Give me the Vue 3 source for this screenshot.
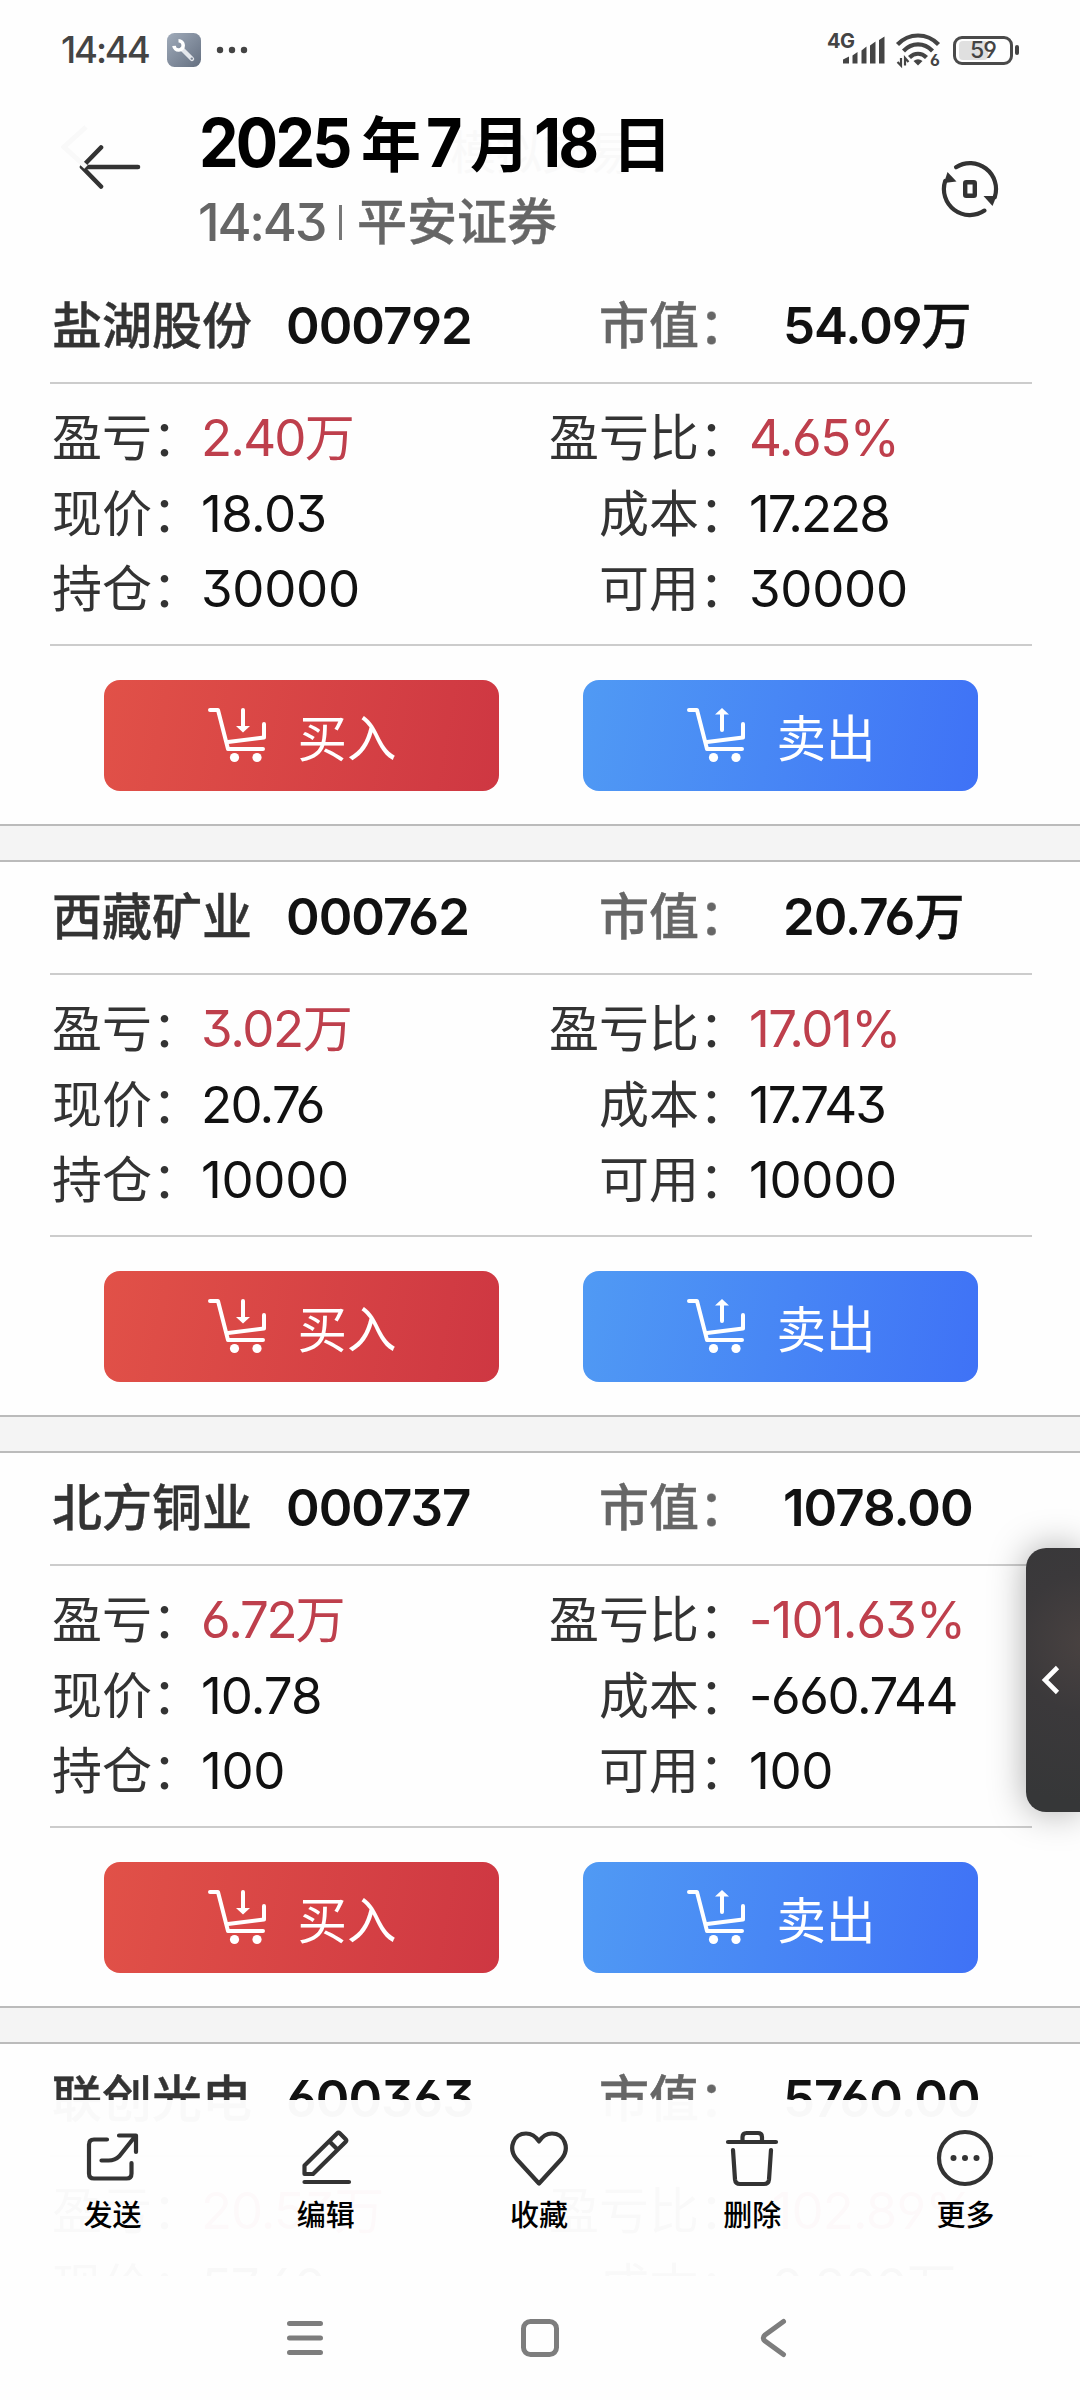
<script setup>
const holdings = [
  { name: '盐湖股份', code: '000792', value: '54.09万', profit: '2.40万', ratio: '4.65%', price: '18.03', cost: '17.228', held: '30000', usable: '30000' },
  { name: '西藏矿业', code: '000762', value: '20.76万', profit: '3.02万', ratio: '17.01%', price: '20.76', cost: '17.743', held: '10000', usable: '10000' },
  { name: '北方铜业', code: '000737', value: '1078.00', profit: '6.72万', ratio: '-101.63%', price: '10.78', cost: '-660.744', held: '100', usable: '100' },
  { name: '联创光电', code: '600363', value: '5760.00', profit: '20.53万', ratio: '-102.89%', price: '57.60', cost: '-0.200万', held: '100', usable: '100' },
]

const rowsOf = (h) => [
  { left: '盈亏', leftValue: h.profit, right: '盈亏比', rightValue: h.ratio, red: true },
  { left: '现价', leftValue: h.price, right: '成本', rightValue: h.cost },
  { left: '持仓', leftValue: h.held, right: '可用', rightValue: h.usable },
]

// Splits a value into its number and its trailing unit
const num = (v) => v.replace('万', '')
const unit = (v) => (v.endsWith('万') ? '万' : '')

// Decimals are set tighter than whole numbers; wide digits tighten further
function tracking(v) {
  if (!v.includes('.')) return { letterSpacing: '-0.3px' }
  const wide = (v.match(/[2467]/g) || []).length
  const plain = !unit(v) && !v.includes('%') && !v.startsWith('-')
  const total =
    0.5 + wide * 1.9 + (v.includes('%') ? 3 : 0) + (unit(v) ? 3 : 0) + (v.startsWith('-') ? 1.5 : 0) +
    (plain ? 2.2 : 0) + (v.includes('17') ? 3.5 : 0)
  return { letterSpacing: `${-(total / num(v).length).toFixed(2)}px` }
}
</script>

<template>
  <div class="screen">
    <div class="status">
      <span class="clock">14:44</span>
      <svg class="wrench" width="34" height="34" viewBox="0 0 34 34">
        <defs>
          <linearGradient id="tool" x1="0" y1="0" x2="1" y2="1">
            <stop offset="0" stop-color="#a0abba" />
            <stop offset="1" stop-color="#646f80" />
          </linearGradient>
        </defs>
        <rect width="34" height="34" rx="7.5" fill="url(#tool)" />
        <path d="M15 16L25 26" stroke="#e4e7ec" stroke-width="4.400" stroke-linecap="round" />
        <path d="M11.500 7.800A4.600 4.600 0 1 1 7 12.800" fill="none" stroke="#fff" stroke-width="3.600" />
        <circle cx="24.800" cy="25.600" r="1.200" fill="#7b8696" />
      </svg>
      <svg class="dots" width="32" height="8" viewBox="0 0 32 8">
        <g fill="#444"><circle cx="4" cy="4" r="3.200" /><circle cx="16" cy="4" r="3.200" /><circle cx="28" cy="4" r="3.200" /></g>
      </svg>
      <div class="indicators">
        <div class="cell">
          <span class="net">4G</span>
          <svg width="42" height="28" viewBox="0 0 42 28" fill="#444">
            <path d="M0 27.5V23.5L6 20.5V27.5ZM9.5 27.5V19.5L14.5 16V27.5ZM18.5 27.5V14.5L23.5 10.5V27.5ZM27 27.5V9.5L32.500 5.500V27.500ZM36 27.500V4L41.500 .5V27.500Z" />
          </svg>
        </div>
        <svg class="wifi" width="44" height="34" viewBox="0 0 44 34">
          <g fill="none" stroke="#444" stroke-width="4.200">
            <path d="M1.500 11.500C13 -.5 31 -.5 42.500 11.500" />
            <path d="M7.500 18C16 9.200 28 9.200 36.500 18" />
            <path d="M13.500 24.500C18.500 19.500 25.500 19.500 30.500 24.500" />
          </g>
          <path d="M17.500 28Q22 24.500 26.500 28L22 32.500Z" fill="#444" />
          <path d="M5 25V32.500L1.500 29M9 32.500V25L12.500 29" fill="none" stroke="#444" stroke-width="2.200" />
          <text x="34" y="32.500" font-size="16" font-weight="700" fill="#444">6</text>
        </svg>
        <div class="battery"><span class="level"></span><b>59</b></div>
        <i class="nub"></i>
      </div>
    </div>

    <header class="head">
      <svg class="ghost-back" width="28" height="46" viewBox="0 0 28 46"><path d="M25 3L3 23L25 43" fill="none" stroke="#f9f9f9" stroke-width="5" /></svg>
      <span class="ghost-title">模拟交易</span>
      <svg class="back" width="62" height="46" viewBox="0 0 62 46">
        <path d="M22 3.500L3 23L22 42.500M3 23H59" fill="none" stroke="#333" stroke-width="4.600" stroke-linecap="round" stroke-linejoin="round" />
      </svg>
      <div class="titles">
        <h1><span class="year"><b>2025</b></span><em>年</em><span class="month"><b>7</b></span><em>月</em><span class="day"><b>18</b></span><em>日</em></h1>
        <p><span>14:43</span><i></i><em>平安证券</em></p>
      </div>
      <svg class="refresh" width="60" height="60" viewBox="0 0 60 60">
        <g fill="none" stroke="#333" stroke-width="4.200" stroke-linecap="round">
          <path d="M16 8.200A26 26 0 0 1 54.800 38" />
          <path d="M44.500 51.600A26 26 0 0 1 5.200 22" />
        </g>
        <path d="M7.500 13L16.500 22.500L4 24Z" fill="#333" />
        <path d="M52.500 47L43.500 37L56.500 37Z" fill="#333" />
        <rect x="25.200" y="23.200" width="9.600" height="13.600" rx="1" fill="none" stroke="#333" stroke-width="4.400" />
      </svg>
    </header>

    <main>
      <section v-for="h in holdings" :key="h.code" class="card">
        <div class="top">
          <span class="name">{{ h.name }}</span>
          <span class="code">{{ h.code }}</span>
          <span class="cap">市值：</span>
          <span class="total">{{ num(h.value) }}<em>{{ unit(h.value) }}</em></span>
        </div>
        <div class="grid">
          <div v-for="r in rowsOf(h)" :key="r.left" class="row" :class="{ red: r.red }">
            <span class="label left">{{ r.left }}：</span>
            <span class="val" :style="tracking(r.leftValue)">{{ num(r.leftValue) }}<em>{{ unit(r.leftValue) }}</em></span>
            <span class="label right">{{ r.right }}：</span>
            <span class="val" :style="tracking(r.rightValue)">{{ num(r.rightValue) }}<em>{{ unit(r.rightValue) }}</em></span>
          </div>
        </div>
        <div class="actions">
          <button v-for="side in ['buy', 'sell']" :key="side" :class="side">
            <svg width="60" height="58" viewBox="0 0 60 58">
              <path d="M4 4H12L22 43H57M22 36L58 31.500V18" fill="none" stroke="#fff" stroke-width="4" stroke-linecap="round" stroke-linejoin="round" />
              <circle cx="28.500" cy="51.500" r="4.600" fill="#fff" /><circle cx="51" cy="51.500" r="4.600" fill="#fff" />
              <g v-if="side === 'buy'"><path d="M37 4V22" stroke="#fff" stroke-width="4" stroke-linecap="round" /><path d="M30 20H44L37 26.500Z" fill="#fff" /></g>
              <g v-else><path d="M37 8V24" stroke="#fff" stroke-width="4" stroke-linecap="round" /><path d="M30 8.500H44L37 2Z" fill="#fff" /></g>
            </svg>
            <span>{{ side === 'buy' ? '买入' : '卖出' }}</span>
          </button>
        </div>
      </section>
    </main>

    <div class="side-tab">
      <svg width="20" height="32" viewBox="0 0 20 32"><path d="M16.500 3.500L4 16L16.500 28.500" fill="none" stroke="#fff" stroke-width="4.600" /></svg>
    </div>

    <footer>
      <div class="tools">
        <div class="tool">
          <svg width="60" height="60" viewBox="0 0 60 60"><path d="M24 11.500H11Q6 11.500 6 16.500V45.500Q6 50.500 11 50.500H43.500Q48.500 50.500 48.500 45.500V35M36 7.500H53V24M52 8.500L36.500 28Q32 32.500 25.500 32.500H18.500" /></svg>
          <span>发送</span>
        </div>
        <div class="tool">
          <svg width="60" height="60" viewBox="0 0 60 60"><path d="M8.500 54H53M8.500 46V37.500L41 5.500Q42.500 4 44 5.500L49.500 11Q51 12.500 49.500 14L17 46ZM33.500 13.500L41.500 21.500" /></svg>
          <span>编辑</span>
        </div>
        <div class="tool">
          <svg width="60" height="60" viewBox="0 0 60 60"><path d="M30 55.500L7.500 31C-1.500 20 5 5.500 17 5.500Q25 5.500 30 13.500Q35 5.500 43 5.500C55 5.500 61.500 20 52.500 31Z" /></svg>
          <span>收藏</span>
        </div>
        <div class="tool">
          <svg width="60" height="60" viewBox="0 0 60 60"><path d="M6 14H54M20.500 14V9Q20.500 5 24.500 5H36Q40 5 40 9V14M11 22L13 51.500Q13.500 56 18 56H42Q46.500 56 47 51.500L49 22" /></svg>
          <span>删除</span>
        </div>
        <div class="tool">
          <svg width="60" height="60" viewBox="0 0 60 60"><circle cx="30" cy="30" r="26" /><g class="solid"><circle cx="18.500" cy="30" r="3" /><circle cx="30" cy="30" r="3" /><circle cx="41.500" cy="30" r="3" /></g></svg>
          <span>更多</span>
        </div>
      </div>
      <nav>
        <svg width="40" height="40" viewBox="0 0 40 40"><path d="M4.500 5.500H35.500M4.500 20H35.500M4.500 34.500H35.500" /></svg>
        <svg width="40" height="40" viewBox="0 0 40 40"><rect x="3.500" y="3.500" width="33" height="33" rx="7" /></svg>
        <svg width="40" height="40" viewBox="0 0 40 40"><path d="M28.500 3.500L10 17Q6.500 20 10 23L28.500 36.500" /></svg>
      </nav>
    </footer>
  </div>
</template>

<style>
body {
  background: #fefefe;
}
</style>

<style scoped>
.screen {
  position: relative;
  width: 1080px;
  height: 2400px;
  overflow: hidden;
  background: #fefefe;
  color: #111;
  font-family: Inter, "Noto Sans CJK SC", sans-serif;
  font-feature-settings: "cv03", "cv04", "cv09";
}

svg {
  display: block;
  flex: none;
}

em {
  font-family: "Noto Sans CJK SC", sans-serif;
  font-style: normal;
  line-height: 0;
}

main {
  height: 2005px;
  overflow: hidden;
}

.status {
  display: flex;
  align-items: center;
  box-sizing: border-box;
  height: 100px;
  padding-left: 61px;
  color: #444;
}

.clock {
  width: 106px;
  font-size: 36.5px;
  font-weight: 500;
  letter-spacing: -2.1px;
}

.dots {
  margin-left: 15px;
}

.indicators {
  display: flex;
  align-items: center;
  margin-left: auto;
  padding-right: 61px;
}

.cell {
  position: relative;
  width: 42px;
  margin-right: 11px;
}

.net {
  position: absolute;
  left: -16px;
  top: -5px;
  font-size: 20px;
  font-weight: 700;
  line-height: 20px;
  letter-spacing: -0.5px;
}

.wifi {
  margin-right: 13px;
  overflow: visible;
}

.battery {
  position: relative;
  box-sizing: border-box;
  width: 60px;
  height: 29px;
  border: 3px solid #4a4a4a;
  border-radius: 9px;
  text-align: center;
}

.battery b {
  position: relative;
  display: block;
  font-size: 23px;
  font-weight: 500;
  line-height: 23px;
  letter-spacing: -1px;
}

.level {
  position: absolute;
  left: 3px;
  top: 2px;
  width: 29px;
  height: 19px;
  border-radius: 4px;
  background: #e0e0e0;
}

.nub {
  width: 4px;
  height: 10px;
  margin-left: 2px;
  border-radius: 2px;
  background: #444;
}

.head {
  position: relative;
  display: flex;
  height: 171px;
  padding-left: 79px;
}

.back {
  margin-top: 44px;
}

.ghost-back {
  position: absolute;
  left: 61px;
  top: 24px;
}

.ghost-title {
  position: absolute;
  left: 450px;
  top: 22px;
  color: #f9f9f9;
  font-size: 46px;
  line-height: 60px;
}

.titles {
  position: relative;
  margin-left: 58px;
}

h1 {
  display: flex;
  align-items: baseline;
  height: 90px;
  margin: 0;
  color: #000;
  font-size: 68px;
  font-weight: 700;
  line-height: 85px;
  white-space: nowrap;
}

h1 em {
  width: 60px;
  font-size: 60px;
}

h1 span {
  box-sizing: border-box;
  letter-spacing: -3px;
}

h1 b {
  display: inline-block;
  font-weight: 650;
  transform: scaleX(0.925);
  transform-origin: 0 50%;
}

.year {
  width: 162px;
}

.month {
  width: 49px;
  padding-left: 5px;
}

.day {
  width: 82px;
  padding-left: 4px;
}

p {
  display: flex;
  align-items: center;
  height: 64px;
  margin: 0;
  color: #666;
  font-size: 52px;
  font-weight: 500;
}

p span {
  width: 141px;
  margin-left: -1px;
  letter-spacing: -2.2px;
}

p i {
  width: 3px;
  height: 35px;
  margin-right: 15px;
  background: #777;
}

p em {
  padding-bottom: 8px;
  font-size: 50px;
  -webkit-text-stroke: 0.4px;
}

.refresh {
  position: absolute;
  left: 940px;
  top: 59px;
}

.card {
  border-bottom: 2px solid #bbb;
}

.card::after {
  content: "";
  display: block;
  height: 34px;
  border-top: 2px solid #bbb;
  background: #f4f4f4;
}

.top {
  display: flex;
  align-items: baseline;
  height: 111px;
  margin: 0 48px 0 50px;
  border-bottom: 2px solid #ccc;
  font-size: 51px;
  font-weight: 600;
  line-height: 109px;
  letter-spacing: -1px;
}

.top em {
  font-size: 50px;
  font-weight: 500;
  -webkit-text-stroke: 0.5px;
}

.name,
.cap {
  font-size: 50px;
  font-weight: 500;
  letter-spacing: 0;
  white-space: nowrap;
  -webkit-text-stroke: 0.4px;
}

.name {
  width: 234px;
  padding-left: 2px;
  color: #333;
}

.code {
  width: 313px;
}

.cap {
  width: 184px;
  color: #666;
}

.grid {
  box-sizing: border-box;
  height: 262px;
  margin: 0 48px 0 50px;
  padding-top: 16px;
  border-bottom: 2px solid #ccc;
}

.row {
  display: flex;
  align-items: baseline;
  height: 75.67px;
  font-size: 51px;
  line-height: 75.67px;
}

.label {
  flex: none;
  color: #333;
  font-size: 50px;
  white-space: nowrap;
}

.left {
  width: 149px;
  padding-left: 2px;
}

.right {
  width: 202px;
  text-align: right;
}

.val {
  white-space: nowrap;
}

.left + .val {
  flex: none;
  width: 346px;
}

.row em {
  font-size: 50px;
}

.red .val {
  color: #be3f4c;
}

.actions {
  display: flex;
  gap: 84px;
  height: 144px;
  padding: 34px 0 0 104px;
}

button {
  display: flex;
  align-items: flex-start;
  box-sizing: border-box;
  width: 395px;
  height: 111px;
  padding: 26px 0 0 102px;
  border: 0;
  border-radius: 16px;
  color: #fff;
  font-family: "Noto Sans CJK SC", sans-serif;
  font-size: 49.5px;
}

button span {
  margin: 3px 0 0 31.5px;
  line-height: 54px;
}

.buy {
  background: linear-gradient(100deg, #e15148, #ce3742);
}

.sell {
  background: linear-gradient(100deg, #509af4, #3f72f6);
}

.side-tab {
  position: absolute;
  left: 1026px;
  top: 1548px;
  display: flex;
  align-items: center;
  box-sizing: border-box;
  width: 54px;
  height: 264px;
  padding-left: 15px;
  border-radius: 20px 0 0 20px;
  background: radial-gradient(circle at 60px 95px, #494241, #3b393b 70px, #363738 160px);
  box-shadow: 0 0 36px rgba(0, 0, 0, 0.34);
}

footer {
  position: absolute;
  left: 0;
  top: 2100px;
  width: 1080px;
}

.tools {
  display: flex;
  box-sizing: border-box;
  height: 176px;
  padding: 28px 8px 0 6px;
  background: rgba(254, 254, 254, 0.975);
}

.tool {
  display: flex;
  flex: 1;
  flex-direction: column;
  align-items: center;
  color: #000;
  font-size: 29px;
  font-weight: 500;
}

.tool span {
  margin-top: 12px;
  line-height: 32px;
}

.tool svg {
  fill: none;
  stroke: #333;
  stroke-width: 4.2;
  stroke-linecap: round;
  stroke-linejoin: round;
}

.tool .solid {
  fill: #333;
  stroke: none;
}

nav {
  display: flex;
  gap: 195px;
  height: 124px;
  padding: 42px 0 0 285px;
  box-sizing: border-box;
  background: #fefefe;
}

nav svg {
  fill: none;
  stroke: #7d7d7d;
  stroke-width: 5;
  stroke-linecap: round;
}
</style>
